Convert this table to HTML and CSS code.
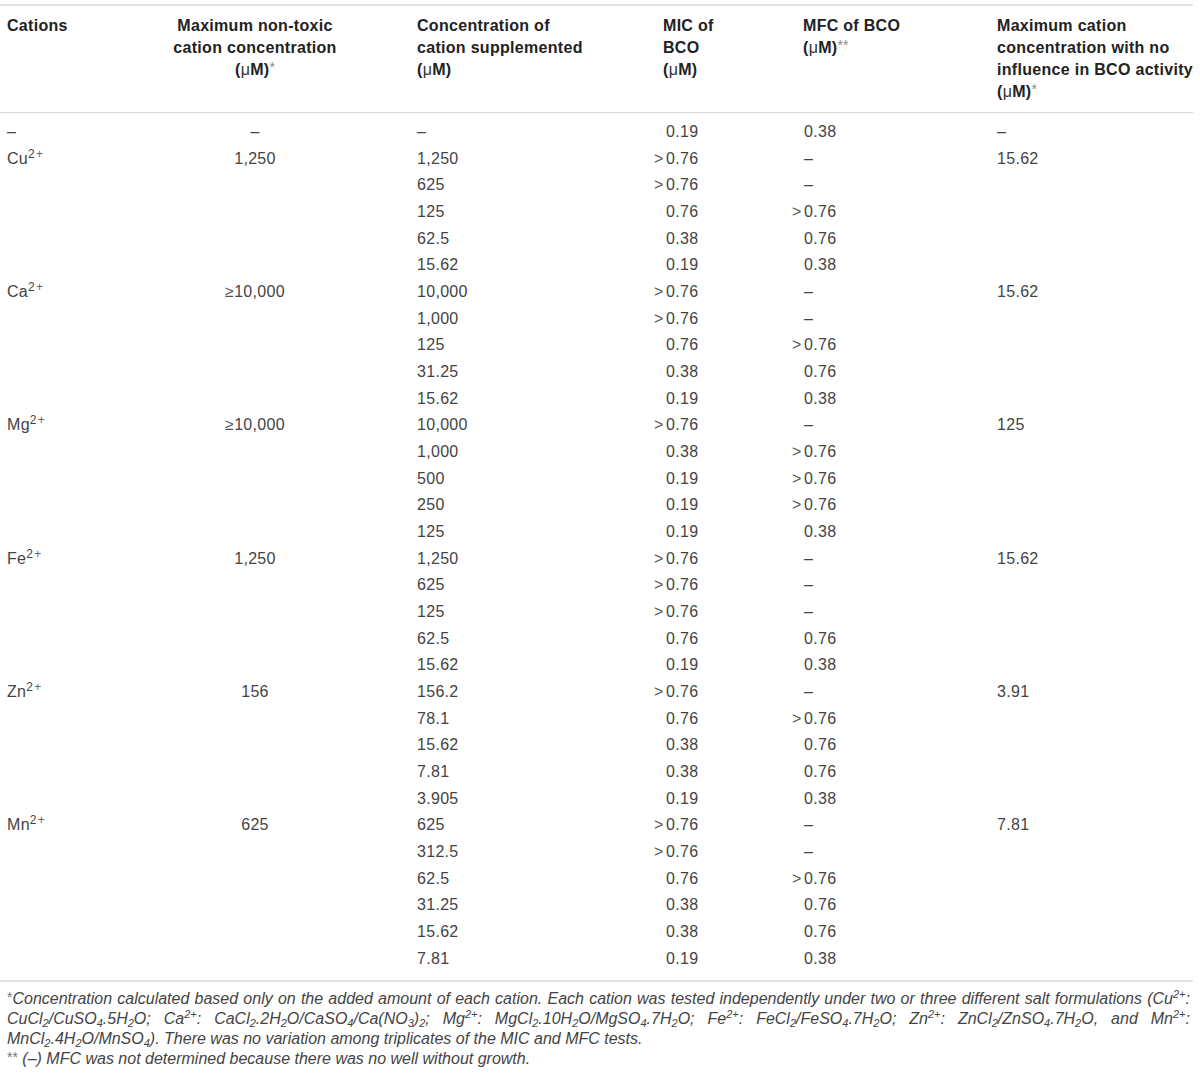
FILE: index.html
```html
<!DOCTYPE html>
<html>
<head>
<meta charset="utf-8">
<link rel="stylesheet" href="styles.css">
</head>
<body>
<div class="page">
<table class="data">
<colgroup>
<col class="c1"><col class="c2"><col class="c3"><col class="c4"><col class="c5"><col class="c6">
</colgroup>
<thead>
<tr>
<th>Cations</th>
<th class="ctr">Maximum non-toxic<br>cation concentration<br>(<span class="mu">μ</span>M)<span class="ast">*</span></th>
<th>Concentration of<br>cation supplemented<br>(<span class="mu">μ</span>M)</th>
<th>MIC of<br>BCO<br>(<span class="mu">μ</span>M)</th>
<th>MFC of BCO<br>(<span class="mu">μ</span>M)<span class="ast">**</span></th>
<th>Maximum cation<br>concentration with no<br>influence in BCO activity<br>(<span class="mu">μ</span>M)<span class="ast">*</span></th>
</tr>
</thead>
<tbody>
<tr class="first"><td>–</td><td class="ctr">–</td><td>–</td><td class="n4"><span class="v">0.19</span></td><td class="n5"><span class="v">0.38</span></td><td>–</td></tr>
<tr><td>Cu<sup>2<span class="pl">+</span></sup></td><td class="ctr">1,250</td><td>1,250</td><td class="n4"><span class="v"><span class="gt">&gt;</span>0.76</span></td><td class="n5"><span class="v">–</span></td><td>15.62</td></tr>
<tr><td></td><td></td><td>625</td><td class="n4"><span class="v"><span class="gt">&gt;</span>0.76</span></td><td class="n5"><span class="v">–</span></td><td></td></tr>
<tr><td></td><td></td><td>125</td><td class="n4"><span class="v">0.76</span></td><td class="n5"><span class="v"><span class="gt">&gt;</span>0.76</span></td><td></td></tr>
<tr><td></td><td></td><td>62.5</td><td class="n4"><span class="v">0.38</span></td><td class="n5"><span class="v">0.76</span></td><td></td></tr>
<tr><td></td><td></td><td>15.62</td><td class="n4"><span class="v">0.19</span></td><td class="n5"><span class="v">0.38</span></td><td></td></tr>
<tr><td>Ca<sup>2<span class="pl">+</span></sup></td><td class="ctr"><span class="ge">≥</span>10,000</td><td>10,000</td><td class="n4"><span class="v"><span class="gt">&gt;</span>0.76</span></td><td class="n5"><span class="v">–</span></td><td>15.62</td></tr>
<tr><td></td><td></td><td>1,000</td><td class="n4"><span class="v"><span class="gt">&gt;</span>0.76</span></td><td class="n5"><span class="v">–</span></td><td></td></tr>
<tr><td></td><td></td><td>125</td><td class="n4"><span class="v">0.76</span></td><td class="n5"><span class="v"><span class="gt">&gt;</span>0.76</span></td><td></td></tr>
<tr><td></td><td></td><td>31.25</td><td class="n4"><span class="v">0.38</span></td><td class="n5"><span class="v">0.76</span></td><td></td></tr>
<tr><td></td><td></td><td>15.62</td><td class="n4"><span class="v">0.19</span></td><td class="n5"><span class="v">0.38</span></td><td></td></tr>
<tr><td>Mg<sup>2<span class="pl">+</span></sup></td><td class="ctr"><span class="ge">≥</span>10,000</td><td>10,000</td><td class="n4"><span class="v"><span class="gt">&gt;</span>0.76</span></td><td class="n5"><span class="v">–</span></td><td>125</td></tr>
<tr><td></td><td></td><td>1,000</td><td class="n4"><span class="v">0.38</span></td><td class="n5"><span class="v"><span class="gt">&gt;</span>0.76</span></td><td></td></tr>
<tr><td></td><td></td><td>500</td><td class="n4"><span class="v">0.19</span></td><td class="n5"><span class="v"><span class="gt">&gt;</span>0.76</span></td><td></td></tr>
<tr><td></td><td></td><td>250</td><td class="n4"><span class="v">0.19</span></td><td class="n5"><span class="v"><span class="gt">&gt;</span>0.76</span></td><td></td></tr>
<tr><td></td><td></td><td>125</td><td class="n4"><span class="v">0.19</span></td><td class="n5"><span class="v">0.38</span></td><td></td></tr>
<tr><td>Fe<sup>2<span class="pl">+</span></sup></td><td class="ctr">1,250</td><td>1,250</td><td class="n4"><span class="v"><span class="gt">&gt;</span>0.76</span></td><td class="n5"><span class="v">–</span></td><td>15.62</td></tr>
<tr><td></td><td></td><td>625</td><td class="n4"><span class="v"><span class="gt">&gt;</span>0.76</span></td><td class="n5"><span class="v">–</span></td><td></td></tr>
<tr><td></td><td></td><td>125</td><td class="n4"><span class="v"><span class="gt">&gt;</span>0.76</span></td><td class="n5"><span class="v">–</span></td><td></td></tr>
<tr><td></td><td></td><td>62.5</td><td class="n4"><span class="v">0.76</span></td><td class="n5"><span class="v">0.76</span></td><td></td></tr>
<tr><td></td><td></td><td>15.62</td><td class="n4"><span class="v">0.19</span></td><td class="n5"><span class="v">0.38</span></td><td></td></tr>
<tr><td>Zn<sup>2<span class="pl">+</span></sup></td><td class="ctr">156</td><td>156.2</td><td class="n4"><span class="v"><span class="gt">&gt;</span>0.76</span></td><td class="n5"><span class="v">–</span></td><td>3.91</td></tr>
<tr><td></td><td></td><td>78.1</td><td class="n4"><span class="v">0.76</span></td><td class="n5"><span class="v"><span class="gt">&gt;</span>0.76</span></td><td></td></tr>
<tr><td></td><td></td><td>15.62</td><td class="n4"><span class="v">0.38</span></td><td class="n5"><span class="v">0.76</span></td><td></td></tr>
<tr><td></td><td></td><td>7.81</td><td class="n4"><span class="v">0.38</span></td><td class="n5"><span class="v">0.76</span></td><td></td></tr>
<tr><td></td><td></td><td>3.905</td><td class="n4"><span class="v">0.19</span></td><td class="n5"><span class="v">0.38</span></td><td></td></tr>
<tr><td>Mn<sup>2<span class="pl">+</span></sup></td><td class="ctr">625</td><td>625</td><td class="n4"><span class="v"><span class="gt">&gt;</span>0.76</span></td><td class="n5"><span class="v">–</span></td><td>7.81</td></tr>
<tr><td></td><td></td><td>312.5</td><td class="n4"><span class="v"><span class="gt">&gt;</span>0.76</span></td><td class="n5"><span class="v">–</span></td><td></td></tr>
<tr><td></td><td></td><td>62.5</td><td class="n4"><span class="v">0.76</span></td><td class="n5"><span class="v"><span class="gt">&gt;</span>0.76</span></td><td></td></tr>
<tr><td></td><td></td><td>31.25</td><td class="n4"><span class="v">0.38</span></td><td class="n5"><span class="v">0.76</span></td><td></td></tr>
<tr><td></td><td></td><td>15.62</td><td class="n4"><span class="v">0.38</span></td><td class="n5"><span class="v">0.76</span></td><td></td></tr>
<tr class="last"><td></td><td></td><td>7.81</td><td class="n4"><span class="v">0.19</span></td><td class="n5"><span class="v">0.38</span></td><td></td></tr>
</tbody>
</table>
<div class="notes">
<p class="jl"><span class="st">*</span>Concentration calculated based only on the added amount of each cation. Each cation was tested independently under two or three different salt formulations (Cu<sup>2+</sup>:</p>
<p class="jl">CuCl<sub>2</sub>/CuSO<sub>4</sub>.5H<sub>2</sub>O; Ca<sup>2+</sup>: CaCl<sub>2</sub>.2H<sub>2</sub>O/CaSO<sub>4</sub>/Ca(NO<sub>3</sub>)<sub>2</sub>; Mg<sup>2+</sup>: MgCl<sub>2</sub>.10H<sub>2</sub>O/MgSO<sub>4</sub>.7H<sub>2</sub>O; Fe<sup>2+</sup>: FeCl<sub>2</sub>/FeSO<sub>4</sub>.7H<sub>2</sub>O; Zn<sup>2+</sup>: ZnCl<sub>2</sub>/ZnSO<sub>4</sub>.7H<sub>2</sub>O, and Mn<sup>2+</sup>:</p>
<p>MnCl<sub>2</sub>.4H<sub>2</sub>O/MnSO<sub>4</sub>). There was no variation among triplicates of the MIC and MFC tests.</p>
<p><span class="st">**</span> (–) MFC was not determined because there was no well without growth.</p>
</div>
</div>
</body>
</html>
```
FILE: styles.css
```css
html, body {
  margin: 0;
  padding: 0;
  background: #ffffff;
}
body {
  font-family: "Liberation Sans", Arial, sans-serif;
  color: #333333;
}
.page {
  width: 1193px;
  padding-top: 4px;
}
.data {
  width: 1193px;
  border-collapse: collapse;
  table-layout: fixed;
}
.c1 { width: 100px; }
.c2 { width: 310px; }
.c3 { width: 246px; }
.c4 { width: 140px; }
.c5 { width: 194px; }
.c6 { width: 203px; }
.data thead tr {
  border-top: 2px solid #e4e4e4;
  border-bottom: 1px solid #d6d6d6;
}
.data th {
  font-weight: bold;
  font-size: 16px;
  line-height: 22px;
  letter-spacing: 0.3px;
  color: #222222;
  text-align: left;
  vertical-align: top;
  padding: 9px 0 9px 7px;
  white-space: nowrap;
}
.data th.ctr {
  text-align: center;
  padding-left: 0;
}
.mu {
  font-weight: normal;
  color: #333;
}
.ast {
  font-weight: normal;
  font-size: 14px;
  color: #8a8a8a;
  vertical-align: 3px;
  line-height: 0;
  letter-spacing: 0;
}
.data td {
  font-size: 16px;
  line-height: 26.67px;
  padding: 0 0 0 7px;
  color: #444444;
  vertical-align: top;
  white-space: nowrap;
  letter-spacing: 0.3px;
}
.data td.ctr {
  text-align: center;
  padding-left: 0;
}
.data tr.first td { padding-top: 6px; }
.data tr.last td { padding-bottom: 7px; }
.data tbody tr.last { border-bottom: 2px solid #e4e4e4; }
.n4 .v { padding-left: 3px; }
.n5 .v { padding-left: 1px; }
.gt {
  display: inline-block;
  width: 12px;
  margin-left: -12px;
  color: #555;
}
.ge { color: #555; }
sup {
  font-size: 12px;
  line-height: 0;
  vertical-align: 6px;
}
.pl { color: #666; padding-left: 1px; }
sub {
  font-size: 11px;
  line-height: 0;
  vertical-align: -3px;
}
.notes {
  padding: 7px 3px 0 7px;
  font-style: italic;
  font-size: 16px;
  line-height: 20px;
  color: #444;
}
.notes p {
  margin: 0;
  white-space: nowrap;
}
.notes p.jl {
  text-align: justify;
  text-align-last: justify;
  white-space: normal;
}
.notes sup {
  font-size: 11px;
  vertical-align: 6px;
}
.st {
  color: #777;
  font-size: 14px;
  font-style: normal;
  vertical-align: 2px;
  line-height: 0;
}
```
